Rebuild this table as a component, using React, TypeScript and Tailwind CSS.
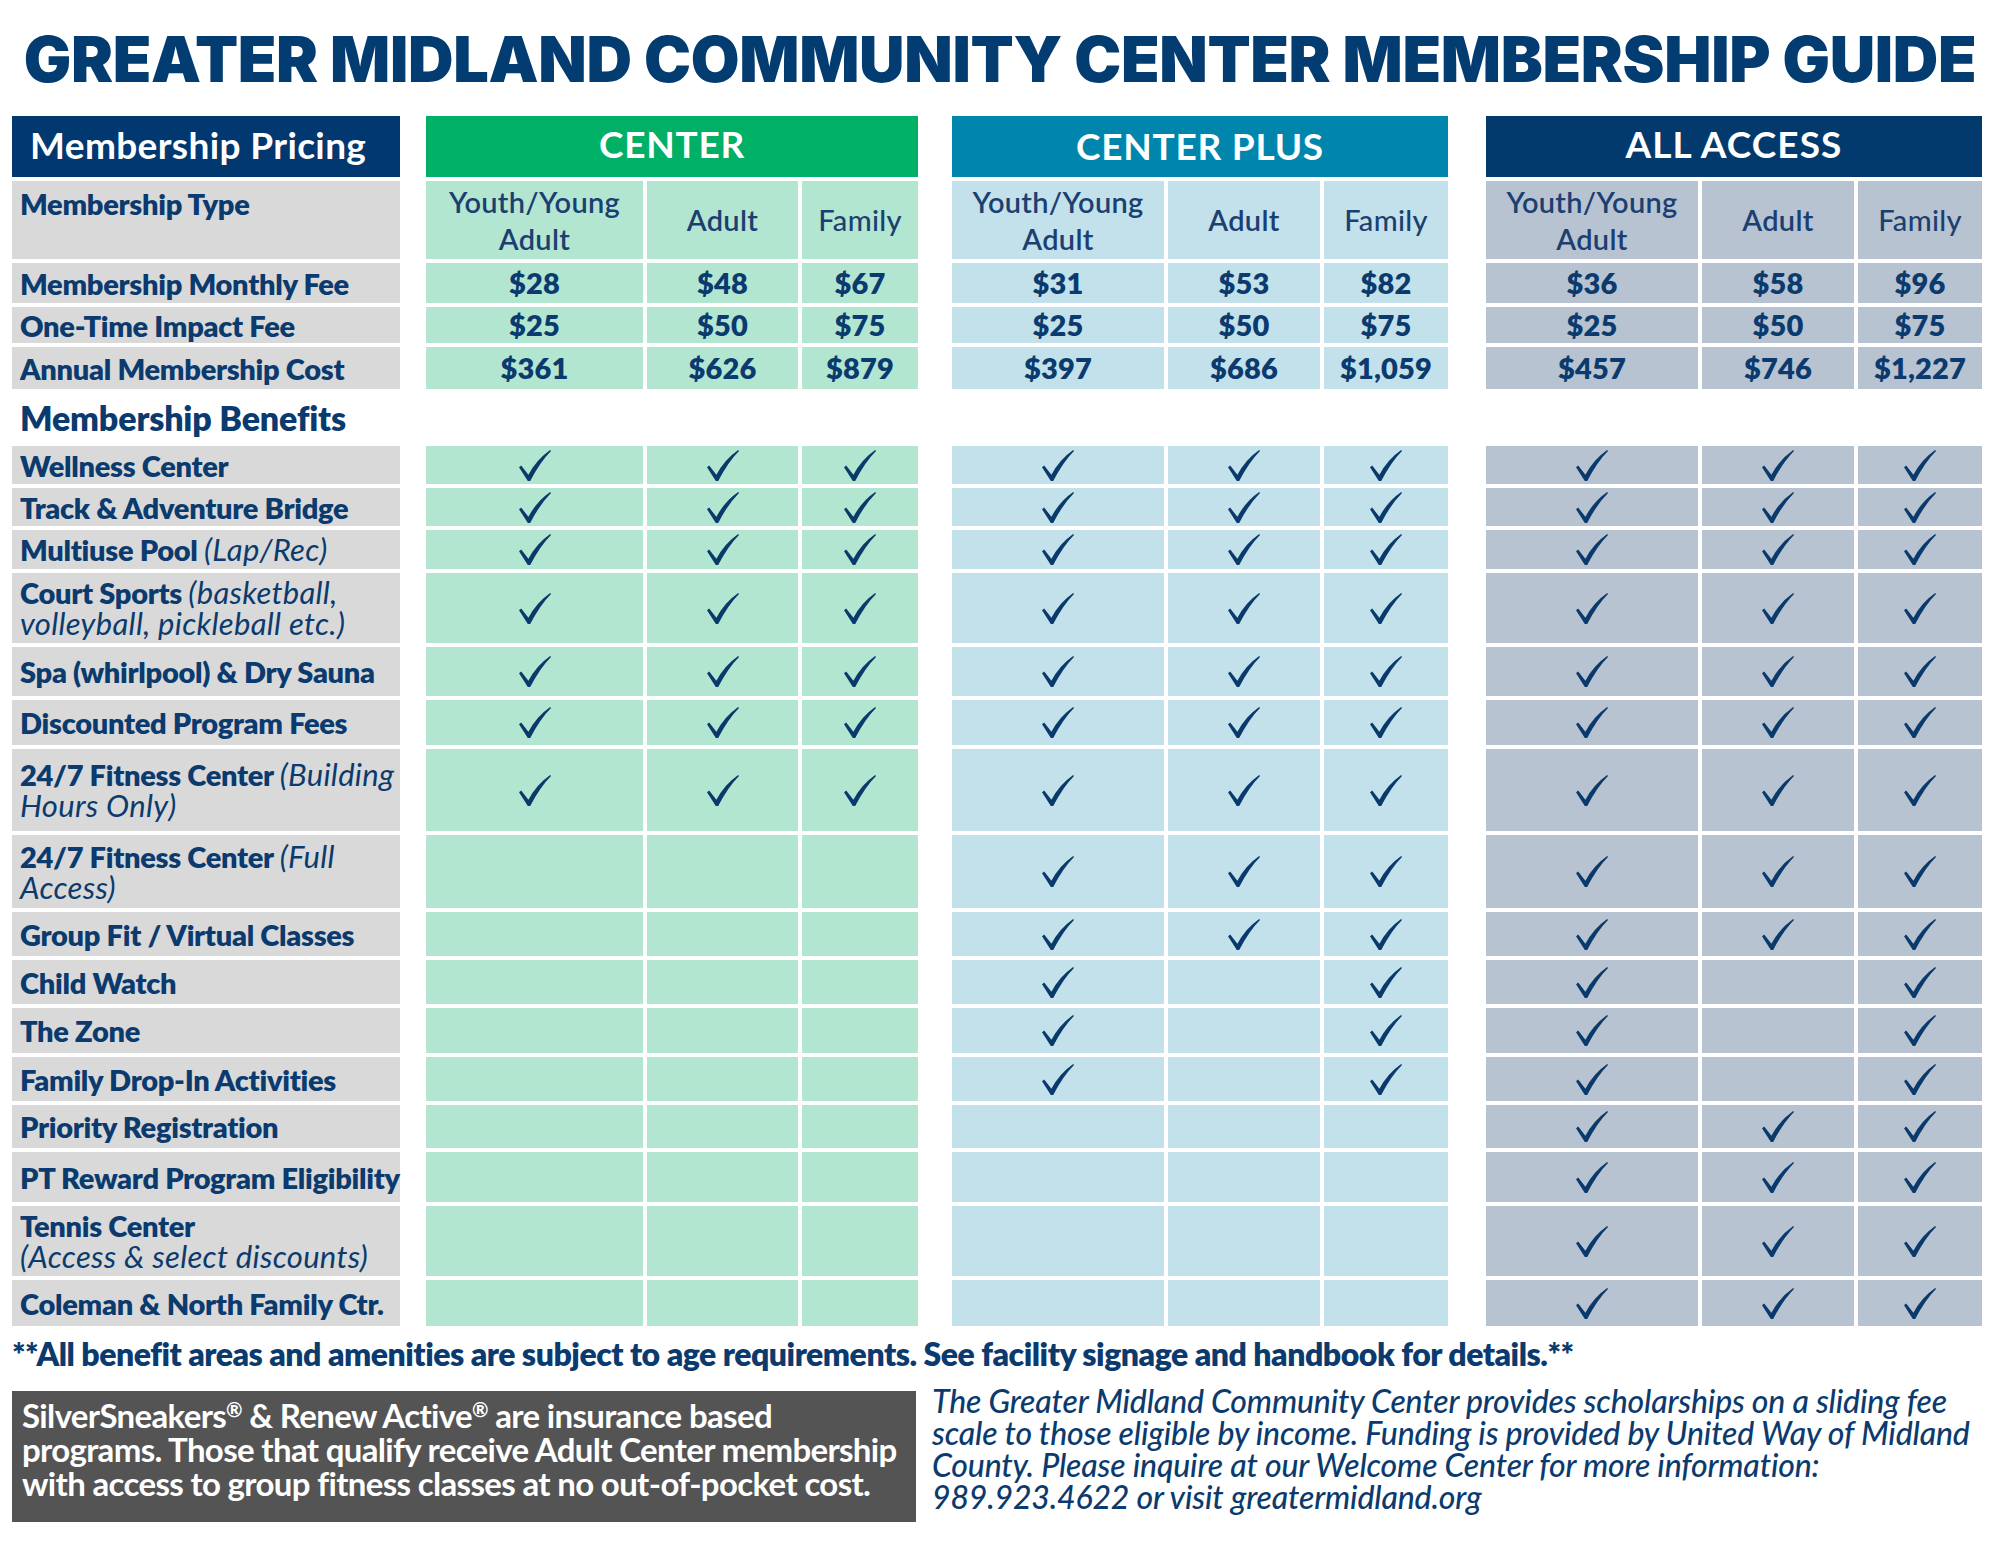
import type { ReactNode } from "react";

const NAVY = "text-[#0b3b6e]";
const IT = "font-normal text-[31px] tracking-[0.01em]";

// 9 flags per row: Center (Y, A, F), Center Plus (Y, A, F), All Access (Y, A, F)
const BENEFITS: { label: ReactNode; checks: string }[] = [
  { label: <>Wellness Center</>, checks: "111111111" },
  { label: <>Track &amp; Adventure Bridge</>, checks: "111111111" },
  { label: <>Multiuse Pool <i className={IT}>(Lap/Rec)</i></>, checks: "111111111" },
  {
    label: (
      <>
        Court Sports <i className={IT}>(basketball,</i>
        <br />
        <i className={IT}>volleyball, pickleball etc.)</i>
      </>
    ),
    checks: "111111111",
  },
  { label: <>Spa (whirlpool) &amp; Dry Sauna</>, checks: "111111111" },
  { label: <>Discounted Program Fees</>, checks: "111111111" },
  {
    label: (
      <>
        24/7 Fitness Center <i className={IT}>(Building</i>
        <br />
        <i className={IT}>Hours Only)</i>
      </>
    ),
    checks: "111111111",
  },
  {
    label: (
      <>
        24/7 Fitness Center <i className={IT}>(Full</i>
        <br />
        <i className={IT}>Access)</i>
      </>
    ),
    checks: "000111111",
  },
  { label: <>Group Fit / Virtual Classes</>, checks: "000111111" },
  { label: <>Child Watch</>, checks: "000101101" },
  { label: <>The Zone</>, checks: "000101101" },
  { label: <>Family Drop-In Activities</>, checks: "000101101" },
  { label: <>Priority Registration</>, checks: "000000111" },
  { label: <>PT Reward Program Eligibility</>, checks: "000000111" },
  {
    label: (
      <>
        Tennis Center
        <br />
        <i className={IT}>(Access &amp; select discounts)</i>
      </>
    ),
    checks: "000000111",
  },
  { label: <>Coleman &amp; North Family Ctr.</>, checks: "000000111" },
];

const PRICES = [
  { label: "Membership Monthly Fee", values: ["$28", "$48", "$67", "$31", "$53", "$82", "$36", "$58", "$96"] },
  { label: "One-Time Impact Fee", values: ["$25", "$50", "$75", "$25", "$50", "$75", "$25", "$50", "$75"] },
  { label: "Annual Membership Cost", values: ["$361", "$626", "$879", "$397", "$686", "$1,059", "$457", "$746", "$1,227"] },
];

const GROUP_BG = ["bg-[#b2e6d1]", "bg-[#c2e1ea]", "bg-[#b7c3d0]"];

function Check() {
  return (
    <svg viewBox="0 0 32 31" className="w-[32px] h-[31px] block">
      <path
        d="M0 17.2 L2.2 15.6 L9.4 24.8 Q17.5 9.5 31.2 0 L32 0.9 Q21 12 11.2 31 L8.8 31 Z"
        fill="#0a3a6c"
      />
    </svg>
  );
}

function Row({
  label,
  cells,
  labelClass = "bg-[#d9d9d9] items-center",
  textClass = "text-[29px] leading-[31px] tracking-[-0.01em]",
  plain = false,
}: {
  label: ReactNode;
  cells: ReactNode[];
  labelClass?: string;
  textClass?: string;
  plain?: boolean;
}) {
  return (
    <>
      <div className={`flex pl-[8px] ${labelClass}`}>
        <div className={`font-extrabold whitespace-nowrap ${textClass}`}>{label}</div>
      </div>
      <div />
      {cells.slice(0, 3).map((c, i) => (
        <div key={`c${i}`} className={`flex items-center justify-center ${plain ? "" : GROUP_BG[0]}`}>
          {c}
        </div>
      ))}
      <div />
      {cells.slice(3, 6).map((c, i) => (
        <div key={`p${i}`} className={`flex items-center justify-center ${plain ? "" : GROUP_BG[1]}`}>
          {c}
        </div>
      ))}
      <div />
      {cells.slice(6, 9).map((c, i) => (
        <div key={`a${i}`} className={`flex items-center justify-center ${plain ? "" : GROUP_BG[2]}`}>
          {c}
        </div>
      ))}
    </>
  );
}

function TypeHeads() {
  return [0, 1, 2].flatMap((g) => [
    <div
      key={`y${g}`}
      className={`${GROUP_BG[g]} flex items-center justify-center text-center font-semibold text-[29px] leading-[37px] tracking-[0.01em] text-[#1c3f72]`}
    >
      Youth/Young
      <br />
      Adult
    </div>,
    <div
      key={`ad${g}`}
      className={`${GROUP_BG[g]} flex items-center justify-center font-semibold text-[29px] tracking-[0.01em] text-[#1c3f72]`}
    >
      Adult
    </div>,
    <div
      key={`f${g}`}
      className={`${GROUP_BG[g]} flex items-center justify-center font-medium text-[29px] tracking-[0.01em] text-[#1c3f72]`}
    >
      Family
    </div>,
  ]);
}

function Reg() {
  return <span className="relative -top-[11px] text-[20px] leading-[0]">®</span>;
}

export default function App() {
  const heads = TypeHeads();
  return (
    <div className={`w-[2000px] h-[1545px] bg-white font-[Lato,sans-serif] ${NAVY}`}>
      <div className="h-[116px] pt-[28px] text-center">
        <h1 className="font-[Inter,sans-serif] font-black text-[63px] leading-[63px] tracking-[-0.005em] text-[#033c71] whitespace-nowrap">
          GREATER MIDLAND COMMUNITY CENTER MEMBERSHIP GUIDE
        </h1>
      </div>

      <div className="ml-[12px] grid grid-cols-[388px_18px_217px_151px_116px_26px_212px_152px_124px_30px_212px_152px_124px] grid-rows-[61px_78px_40px_36px_42px_49px_38px_38px_39px_70px_49px_45px_82px_73px_44px_44px_45px_44px_43px_50px_70px_46px] gap-x-[4px] gap-y-[4px]">
        {/* header row */}
        <div className="bg-[#00386f] flex items-center pl-[18px] pb-[4px]">
          <span className="text-white font-bold text-[37px] tracking-[0.01em]">Membership Pricing</span>
        </div>
        <div />
        <div className="col-span-3 bg-[#00b067] flex items-center justify-center pb-[6px]">
          <span className="text-white font-bold text-[37px] tracking-[0.02em]">CENTER</span>
        </div>
        <div />
        <div className="col-span-3 bg-[#0086ad] flex items-center justify-center pb-[2px]">
          <span className="text-white font-bold text-[37px] tracking-[0.02em]">CENTER PLUS</span>
        </div>
        <div />
        <div className="col-span-3 bg-[#033a6d] flex items-center justify-center pb-[6px]">
          <span className="text-white font-bold text-[37px] tracking-[0.03em]">ALL ACCESS</span>
        </div>

        {/* membership type row */}
        <div className="bg-[#d9d9d9] flex items-start pl-[8px] pt-[1px]">
          <span className="font-extrabold text-[29px] tracking-[-0.01em]">Membership Type</span>
        </div>
        <div />
        {heads.slice(0, 3)}
        <div />
        {heads.slice(3, 6)}
        <div />
        {heads.slice(6, 9)}

        {PRICES.map((p) => (
          <Row
            key={p.label}
            label={p.label}
            cells={p.values.map((v) => (
              <span className="font-extrabold text-[29px] tracking-[0.005em]">{v}</span>
            ))}
          />
        ))}

        <Row
          label="Membership Benefits"
          labelClass="items-center"
          textClass="text-[34px] leading-[36px] tracking-[-0.005em]"
          plain
          cells={Array(9).fill(null)}
        />

        {BENEFITS.map((b, i) => (
          <Row key={i} label={b.label} cells={b.checks.split("").map((c) => (c === "1" ? <Check /> : null))} />
        ))}
      </div>

      <div className="mt-[10px] pl-[12px] font-extrabold text-[32px] leading-[36px] tracking-[-0.015em] whitespace-nowrap">
        **All benefit areas and amenities are subject to age requirements. See facility signage and handbook for details.**
      </div>

      <div className="mt-[19px] flex items-start">
        <div className="ml-[12px] w-[904px] h-[131px] bg-[#545454] text-white pl-[10px] pt-[7px] font-bold text-[33px] leading-[34px] tracking-[-0.02em] whitespace-nowrap">
          SilverSneakers<Reg /> &amp; Renew Active<Reg /> are insurance based
          <br />
          programs. Those that qualify receive Adult Center membership
          <br />
          with access to group fitness classes at no out-of-pocket cost.
        </div>
        <div className="ml-[16px] -mt-[6px] italic font-medium text-[32px] leading-[32px] tracking-[-0.005em] whitespace-nowrap">
          The Greater Midland Community Center provides scholarships on a sliding fee
          <br />
          scale to those eligible by income. Funding is provided by United Way of Midland
          <br />
          County. Please inquire at our Welcome Center for more information:
          <br />
          989.923.4622 or visit greatermidland.org
        </div>
      </div>
    </div>
  );
}
